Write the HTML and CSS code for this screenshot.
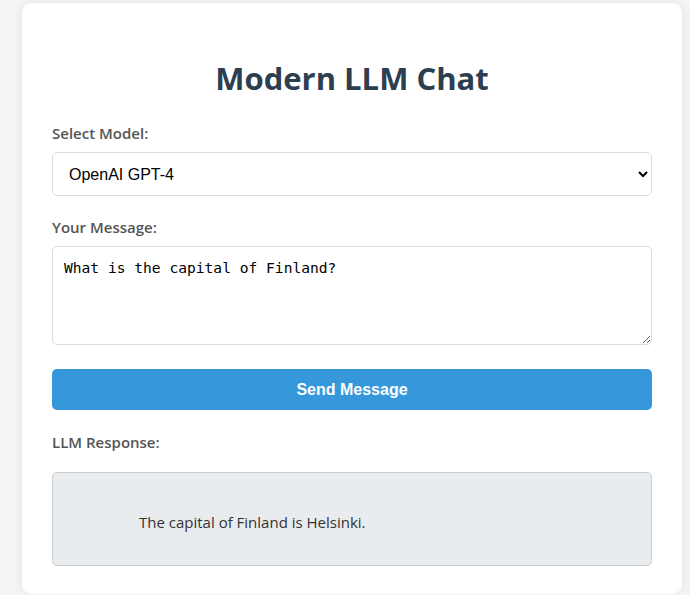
FILE: index.html
```html
<!DOCTYPE html>
<html lang="en">
<head>
<meta charset="utf-8">
<title>Modern LLM Chat</title>
<link rel="stylesheet" href="styles.css">
</head>
<body>
<div class="card">
  <h1 class="title">Modern LLM Chat</h1>
  <label class="label" for="model">Select Model:</label>
  <select id="model" class="select">
    <option>OpenAI GPT-4</option>
  </select>
  <label class="label label-gap" for="msg">Your Message:</label>
  <textarea id="msg" class="textarea">What is the capital of Finland?</textarea>
  <button class="send">Send Message</button>
  <div class="label label-resp">LLM Response:</div>
  <div class="response">The capital of Finland is Helsinki.</div>
</div>
</body>
</html>
```
FILE: styles.css
```css
html, body {
  margin: 0;
  padding: 0;
}
body {
  background: #f4f5f5;
  font-family: "Open Sans", "Noto Sans", sans-serif;
  color: #333;
}
.card {
  width: 600px;
  margin: 3px 0 0 22px;
  padding: 24px 30px 28px;
  background: #fff;
  border-radius: 10px;
  box-shadow: 0 0 12px rgba(0, 0, 0, 0.08);
  display: flex;
  flex-direction: column;
}
.title {
  margin: 30px 0 22px;
  text-align: center;
  font-size: 31px;
  line-height: 42px;
  font-weight: 700;
  color: #2c3e50;
}
.label {
  display: block;
  font-size: 15px;
  line-height: 24px;
  font-weight: 600;
  color: #555;
  margin-bottom: 7px;
}
.label-gap {
  margin-top: 19px;
}
.label-resp {
  margin-top: 20px;
  margin-bottom: 18px;
}
.select {
  height: 44px;
  padding: 0 12px;
  border: 1px solid #ddd;
  border-radius: 5px;
  background: #fff;
  font-family: "Liberation Sans", Arial, sans-serif;
  font-size: 16px;
  color: #000;
}
.textarea {
  height: 99px;
  box-sizing: border-box;
  padding: 11px 11px;
  border: 1px solid #ddd;
  border-radius: 5px;
  font-family: "DejaVu Sans Mono", monospace;
  font-size: 14.6px;
  line-height: 20px;
  color: #000;
  resize: vertical;
}
.send {
  margin-top: 24px;
  height: 41px;
  border: none;
  border-radius: 5px;
  background: #3498db;
  color: #fff;
  font-family: "Liberation Sans", Arial, sans-serif;
  font-size: 16px;
  font-weight: 700;
}
.response {
  height: 94px;
  box-sizing: border-box;
  padding: 37px 15px 0 86px;
  background: #e9ecef;
  border: 1px solid #ccc;
  border-radius: 5px;
  font-size: 15px;
  line-height: 24px;
  color: #333;
}
```
